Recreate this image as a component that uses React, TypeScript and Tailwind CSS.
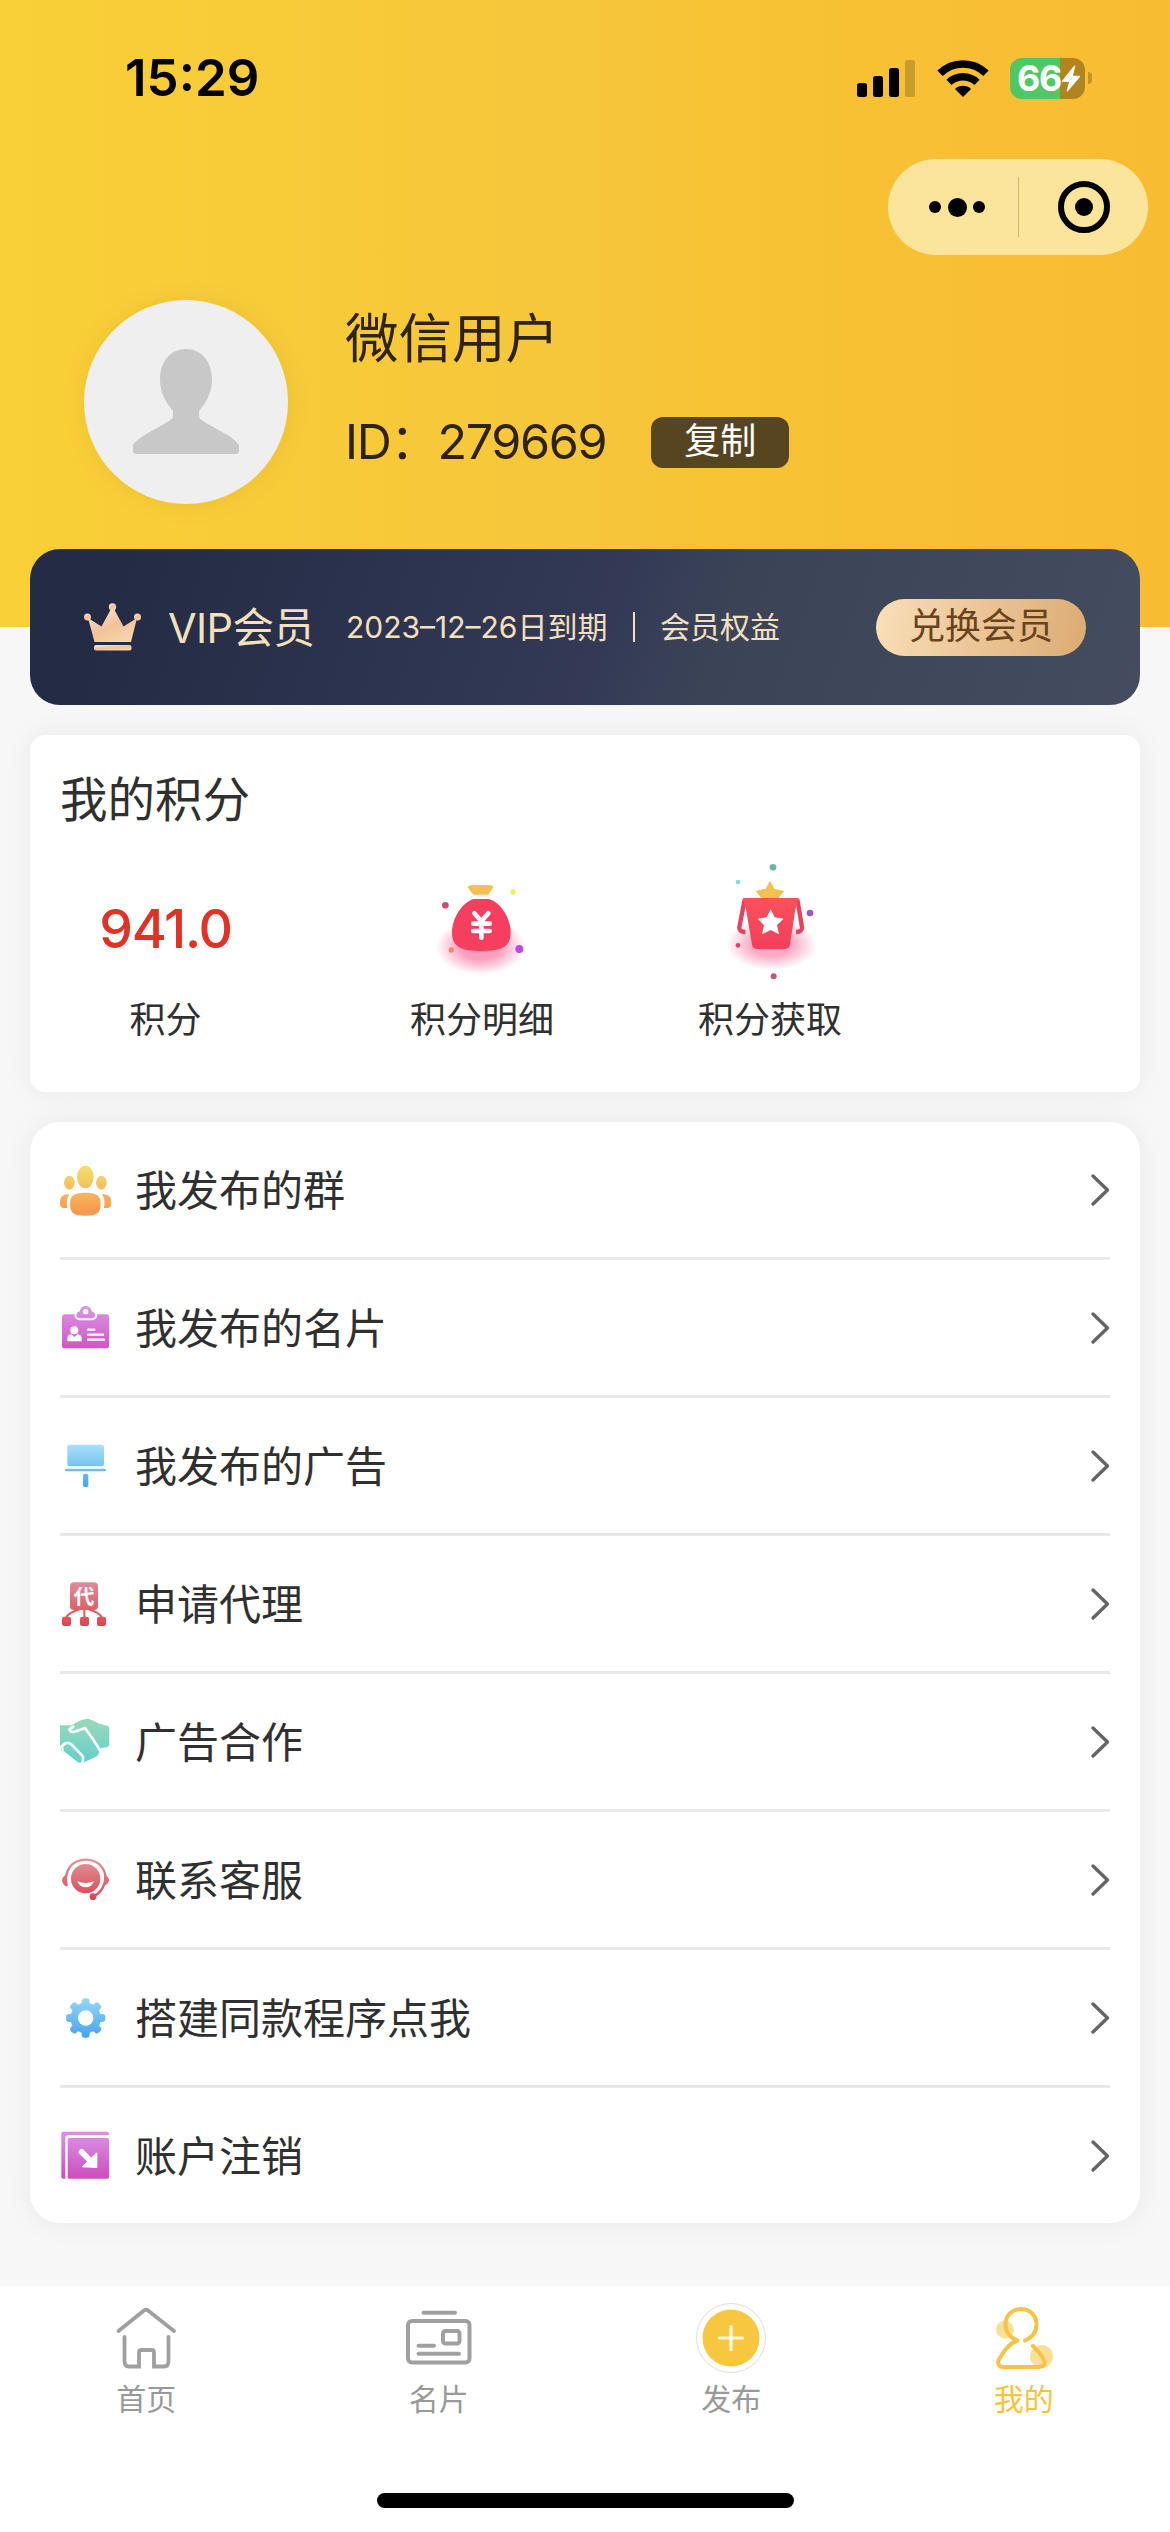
import type { ReactNode } from 'react';

interface MenuItem {
    label: string;
    icon: ReactNode;
}

function Gradient({ id, from, to }: { id: string; from: string; to: string }) {
    return (
        <linearGradient id={id} x1="0" y1="0" x2="0" y2="156" gradientUnits="userSpaceOnUse">
            <stop offset="0.1" stopColor={from} />
            <stop offset="0.9" stopColor={to} />
        </linearGradient>
    );
}

function MenuIcon({ children }: { children: ReactNode }) {
    return (
        <svg viewBox="0 0 156 156" className="h-[52px] w-[52px] shrink-0">
            {children}
        </svg>
    );
}

function GroupIcon() {
    return (
        <MenuIcon>
            <Gradient id="group" from="#f3dc6c" to="#f79a50" />
            <g fill="url(#group)">
                <ellipse cx="76" cy="39" rx="25" ry="34" />
                <ellipse cx="28" cy="56" rx="16" ry="21" />
                <ellipse cx="124" cy="56" rx="16" ry="21" />
                <path d="M76 86C104 86 122 92 122 116C122 147 112 155 76 155C40 155 30 147 30 116C30 92 48 86 76 86Z" />
                <path d="M28 90C20 103 19 117 22 132C6 133 0 130 0 116C0 98 8 91 28 90Z" />
                <path d="M126 90C134 103 135 117 132 132C148 133 154 130 154 116C154 98 146 91 126 90Z" />
            </g>
        </MenuIcon>
    );
}

function CardIcon() {
    return (
        <MenuIcon>
            <Gradient id="card" from="#dc93e4" to="#cf55c6" />
            <rect x="6" y="37" width="141" height="102" rx="8" fill="url(#card)" />
            <path
                d="M60 49C46 49 46 31 60 28C62 7 92 7 95 28C109 31 109 49 95 49Z"
                fill="url(#card)"
                stroke="#fff"
                strokeWidth="12"
                paintOrder="stroke"
            />
            <circle cx="77" cy="29" r="8" fill="#fff" />
            <circle cx="43" cy="85" r="12" fill="#fff" />
            <path d="M22 118V108Q23 98 34 97L43 105L53 97Q64 98 65 108V118Z" fill="#fff" />
            <path
                d="M84 83H103M84 98H129M84 113H132"
                stroke="#fff"
                strokeWidth="7"
                strokeLinecap="round"
            />
        </MenuIcon>
    );
}

function BillboardIcon() {
    return (
        <MenuIcon>
            <Gradient id="billboard" from="#a8dff8" to="#46a8ea" />
            <g fill="url(#billboard)">
                <rect x="22" y="14" width="110" height="65" rx="7" />
                <rect x="15" y="86" width="123" height="8" rx="4" />
                <rect x="69" y="101" width="16" height="40" rx="5" />
            </g>
        </MenuIcon>
    );
}

function AgentIcon() {
    return (
        <MenuIcon>
            <Gradient id="agent" from="#e08a9a" to="#e0484c" />
            <g fill="url(#agent)">
                <rect x="30" y="13" width="84" height="83" rx="12" />
                <rect x="6" y="116" width="27" height="28" rx="6" />
                <rect x="60" y="116" width="27" height="28" rx="6" />
                <rect x="111" y="116" width="27" height="28" rx="6" />
            </g>
            <path
                d="M19 118C24 104 40 102 58 94M73 94V118M125 118C120 104 105 102 87 94"
                fill="none"
                stroke="#df5c66"
                strokeWidth="6"
            />
            <text
                x="72"
                y="77"
                textAnchor="middle"
                fill="#fff"
                className="text-[62px] font-bold"
            >
                代
            </text>
        </MenuIcon>
    );
}

function HandshakeIcon() {
    return (
        <MenuIcon>
            <Gradient id="shake" from="#98d9b9" to="#62d0cf" />
            <path
                d="M0 28L34 28L56 16Q74 7 84 8Q98 12 114 22L140 29Q148 30 148 36V84Q148 92 140 94L124 96L112 120L66 142L52 139L6 108L0 90Z"
                fill="url(#shake)"
            />
            <g fill="none" stroke="#fff" strokeWidth="8" strokeLinejoin="round" strokeLinecap="round">
                <path d="M40 32L28 40Q30 50 44 47L75 36L98 68L122 106" />
                <path d="M-6 102L14 83Q24 77 34 85L66 118Q74 128 64 146" />
                <path d="M8 96V106L54 142" strokeWidth="5" />
            </g>
        </MenuIcon>
    );
}

function SupportIcon() {
    return (
        <MenuIcon>
            <Gradient id="support" from="#e3949a" to="#d8434f" />
            <circle cx="77" cy="74" r="44" fill="url(#support)" />
            <path
                d="M20 96C10 48 38 17 77 17C116 17 144 48 134 86C128 108 116 120 100 127"
                fill="none"
                stroke="url(#support)"
                strokeWidth="7"
            />
            <path d="M19 62Q6 68 6 79Q7 90 19 98Z" fill="url(#support)" />
            <path d="M134 62Q147 68 147 79Q146 90 131 96Z" fill="url(#support)" />
            <circle cx="99" cy="128" r="10" fill="url(#support)" />
            <path d="M52 82Q77 92 102 82Q95 100 77 100Q59 100 52 82Z" fill="#fff" />
        </MenuIcon>
    );
}

function GearIcon() {
    return (
        <MenuIcon>
            <Gradient id="gear" from="#9cd8f2" to="#41a2f2" />
            <mask id="gear-mask" maskUnits="userSpaceOnUse" x="0" y="0" width="156" height="156">
                <circle cx="77" cy="78" r="46" fill="#fff" />
                {[0, 45, 90, 135].map((angle) => (
                    <rect
                        key={angle}
                        x="65"
                        y="19"
                        width="24"
                        height="118"
                        rx="9"
                        fill="#fff"
                        transform={`rotate(${angle} 77 78)`}
                    />
                ))}
                <circle cx="77" cy="78" r="23" fill="#000" />
            </mask>
            <rect width="156" height="156" fill="url(#gear)" mask="url(#gear-mask)" />
        </MenuIcon>
    );
}

function LogoutIcon() {
    return (
        <MenuIcon>
            <Gradient id="logout" from="#dc8de2" to="#cc50c0" />
            <path
                d="M10 5H141Q147 5 147 16H24Q16 16 16 24V146H10Q4 146 4 140V11Q4 5 10 5Z"
                fill="url(#logout)"
            />
            <rect x="23" y="24" width="124" height="122" rx="5" fill="url(#logout)" />
            <path d="M65 66L92 93" stroke="#fff" strokeWidth="18" strokeLinecap="round" />
            <path
                d="M110 70V112L68 110Z"
                fill="#fff"
                stroke="#fff"
                strokeWidth="4"
                strokeLinejoin="round"
            />
        </MenuIcon>
    );
}

const menuItems: MenuItem[] = [
    { label: '我发布的群', icon: <GroupIcon /> },
    { label: '我发布的名片', icon: <CardIcon /> },
    { label: '我发布的广告', icon: <BillboardIcon /> },
    { label: '申请代理', icon: <AgentIcon /> },
    { label: '广告合作', icon: <HandshakeIcon /> },
    { label: '联系客服', icon: <SupportIcon /> },
    { label: '搭建同款程序点我', icon: <GearIcon /> },
    { label: '账户注销', icon: <LogoutIcon /> },
];

function StatusBar() {
    return (
        <div className="flex h-[159px] items-center justify-between pr-[78px] pb-[3px] pl-[125px] text-black">
            <span className="text-[51px] font-semibold">15:29</span>
            <div className="flex items-center">
                <svg viewBox="0 0 58 37" className="h-[37px] w-[58px]">
                    <rect y="23" width="10" height="14" rx="2.5" />
                    <rect x="16" y="16" width="10" height="21" rx="2.5" />
                    <rect x="32" y="8" width="10" height="29" rx="2.5" />
                    <rect x="48" width="10" height="37" rx="2.5" fill="#c99b2a" />
                </svg>
                <svg viewBox="468 117 154 111" className="ml-[22px] h-[37px] w-[52px]">
                    <path
                        d="M476 157A99 99 0 0 1 614 157"
                        fill="none"
                        stroke="#000"
                        strokeWidth="23"
                    />
                    <path
                        d="M503 184A61 61 0 0 1 587 184"
                        fill="none"
                        stroke="#000"
                        strokeWidth="22"
                    />
                    <path d="M545 228L521 204A34 34 0 0 1 569 204Z" />
                </svg>
                <div className="ml-[21px] flex h-[41px] w-[75px] items-center rounded-[12px] bg-[linear-gradient(to_right,#4fc765_67%,#b0851f_67%)] pl-[7px]">
                    <span className="w-[45px] text-[36px] leading-[41px] font-bold tracking-[-0.04em] text-white">
                        66
                    </span>
                    <svg viewBox="843 135 54 80" className="h-[27px] w-[18px] shrink-0">
                        <path
                            d="M881 138L845 183H867L859 212L895 169H873Z"
                            fill="#fff"
                            stroke="#fff"
                            strokeWidth="4"
                            strokeLinejoin="round"
                        />
                    </svg>
                </div>
                <div className="ml-[3px] h-[12px] w-[4px] rounded-r-full bg-[#c4942a]" />
            </div>
        </div>
    );
}

function Capsule() {
    return (
        <div className="mr-[22px] ml-auto flex h-[96px] w-[260px] items-center rounded-full bg-[#fae59b]">
            <div className="flex w-[130px] items-center justify-center gap-[6.5px] pl-[8px]">
                <i className="h-[12px] w-[12px] rounded-full bg-black" />
                <i className="h-[19px] w-[19px] rounded-full bg-black" />
                <i className="h-[12px] w-[12px] rounded-full bg-black" />
            </div>
            <div className="h-[60px] w-px bg-[#c9b87c]" />
            <div className="flex w-[129px] items-center justify-center">
                <div className="flex h-[52px] w-[52px] items-center justify-center rounded-full border-[6.5px] border-black">
                    <i className="h-[18px] w-[18px] rounded-full bg-black" />
                </div>
            </div>
        </div>
    );
}

function Profile() {
    return (
        <div className="mt-[45px] flex pl-[84px]">
            <div className="h-[204px] w-[204px] rounded-full bg-[#efefef] shadow-[0_0_24px_rgba(120,90,0,0.1)]">
                <svg viewBox="0 0 204 204" fill="#c8c8c8">
                    <path d="M102 49C117 49 128 61 128 80C128 92 122 103 115 111V117C117 123 148 134 155 145V151Q155 154 151 154H53Q49 154 49 151V145C56 134 87 123 89 117V111C82 103 76 92 76 80C76 61 87 49 102 49Z" />
                </svg>
            </div>
            <div className="ml-[57px] pt-[9px] text-[#2e2310]">
                <div className="text-[53.5px] leading-[60px]">微信用户</div>
                <div className="mt-[43px] flex h-[60px] items-center">
                    <span className="text-[48.5px] leading-[60px] tracking-[-0.028em]">
                        ID：279669
                    </span>
                    <button
                        type="button"
                        className="ml-[45px] h-[51px] w-[138px] rounded-[12px] bg-[#574522] pb-[3px] text-[36px] leading-[48px] text-white"
                    >
                        复制
                    </button>
                </div>
            </div>
        </div>
    );
}

function VipCard() {
    return (
        <div className="mx-[30px] -mt-[78px] flex h-[156px] items-center rounded-[30px] bg-[linear-gradient(110deg,#242b44_8%,#343a56_52%,#3b4357_62%,#454c5f_100%)] pl-[54px] text-[#f3e0bd]">
            <svg viewBox="0 0 58 49" className="h-[49px] w-[58px]">
                <linearGradient id="crown" x1="0" y1="0" x2="0.6" y2="1">
                    <stop offset="0" stopColor="#fbe6dc" />
                    <stop offset="0.6" stopColor="#f3c295" />
                    <stop offset="1" stopColor="#f7d3ae" />
                </linearGradient>
                <g fill="url(#crown)">
                    <circle cx="3.5" cy="14" r="3.5" />
                    <circle cx="28.5" cy="4" r="3.7" />
                    <circle cx="53.5" cy="14" r="3.5" />
                    <path d="M4 15L17.5 23.5L27 6H30L39.5 23.5L53 15L47 39H10.5Z" />
                    <rect x="10" y="42" width="37.5" height="5.5" rx="2" />
                </g>
            </svg>
            <span className="ml-[26px] w-[178px] pt-[2px] text-[41.5px] font-[380] tracking-[-0.015em]">
                VIP会员
            </span>
            <span className="w-[265px] pt-[1px] text-[30px] font-[380] whitespace-nowrap">
                2023–12–26日到期
            </span>
            <i className="ml-[22px] h-[30px] w-[2px] bg-[#f3e0bd]" />
            <span className="ml-[25px] pt-[1px] text-[30px] font-[380]">会员权益</span>
            <button
                type="button"
                className="mr-[54px] ml-auto h-[57px] w-[210px] rounded-full bg-[linear-gradient(100deg,#f9dfb8,#dcab73)] pb-[3px] text-[36px] leading-[54px] font-[380] text-[#6b421c]"
            >
                兑换会员
            </button>
        </div>
    );
}

function BagIcon() {
    return (
        <svg viewBox="-9 0 390 390" className="h-[130px] w-[130px]">
            <radialGradient id="bag-glow">
                <stop offset="0.45" stopColor="#f98fb3" stopOpacity="0.85" />
                <stop offset="1" stopColor="#f98fb3" stopOpacity="0" />
            </radialGradient>
            <ellipse cx="182" cy="260" rx="134" ry="84" fill="url(#bag-glow)" />
            <path
                d="M162 117H206C238 124 272 172 272 216C272 262 244 273 184 273C124 273 96 262 96 216C96 172 130 124 162 117Z"
                fill="#f43f5e"
            />
            <path d="M143 82Q146 75 160 75H204Q218 75 220 82L205 104H160Z" fill="#f2c14e" />
            <path
                d="M163 160L184 184L205 160M160 191H209M160 213H209M184 186V233"
                fill="none"
                stroke="#fff"
                strokeWidth="14"
                strokeLinecap="round"
                strokeLinejoin="round"
            />
            <circle cx="76" cy="136" r="10" fill="#cf4a78" />
            <circle cx="279" cy="96" r="8" fill="#f5ee55" />
            <circle cx="94" cy="270" r="8" fill="#ec8a6b" />
            <circle cx="298" cy="267" r="12" fill="#b84af0" />
        </svg>
    );
}

function GiftIcon() {
    return (
        <svg viewBox="375 120 390 390" className="h-[130px] w-[130px]">
            <radialGradient id="gift-glow">
                <stop offset="0.45" stopColor="#f98fb3" stopOpacity="0.75" />
                <stop offset="1" stopColor="#f98fb3" stopOpacity="0" />
            </radialGradient>
            <linearGradient id="gift" x1="0" y1="0" x2="0" y2="1">
                <stop offset="0" stopColor="#f9525a" />
                <stop offset="1" stopColor="#f23f5d" />
            </linearGradient>
            <ellipse cx="575" cy="374" rx="136" ry="76" fill="url(#gift-glow)" />
            <path
                d="M570 182L583 206L613 213L594 236H545L527 213L557 206Z"
                fill="#f2c14e"
            />
            <path
                d="M494 238L478 322Q477 336 496 336M652 238L666 322Q667 336 648 336"
                fill="none"
                stroke="#e9405c"
                strokeWidth="13"
            />
            <path
                d="M489 234H656L646 268L630 374Q627 387 614 387H532Q519 387 516 374L498 268Z"
                fill="url(#gift)"
            />
            <path
                d="M572 268L584 292L611 296L591 315L597 343L572 330L546 343L552 315L533 296L560 292Z"
                fill="#fff"
            />
            <circle cx="579" cy="142" r="10" fill="#6fb5a6" />
            <circle cx="474" cy="186" r="7" fill="#7edcd3" />
            <circle cx="690" cy="279" r="10" fill="#a64fd0" />
            <circle cx="474" cy="376" r="7" fill="#dc3f78" />
            <circle cx="581" cy="469" r="9" fill="#c4557b" />
        </svg>
    );
}

function PointsCard() {
    return (
        <div className="mx-[30px] mt-[30px] h-[357px] rounded-[15px] bg-white pt-[35px] text-[#303030] shadow-[0_0_30px_rgba(0,0,0,0.06)]">
            <div className="pl-[30px] text-[47.5px] leading-[60px]">我的积分</div>
            <div className="mt-[30px] grid grid-cols-[271px_362px_214px] text-center text-[36px] leading-[48px]">
                <div>
                    <div className="flex h-[130px] items-center justify-center pt-[7px] text-[53.5px] font-[550] tracking-[-0.025em] text-[#df3327]">
                        941.0
                    </div>
                    <div className="mt-[6px]">积分</div>
                </div>
                <div className="flex flex-col items-center">
                    <BagIcon />
                    <div className="mt-[6px]">积分明细</div>
                </div>
                <div className="flex flex-col items-center">
                    <GiftIcon />
                    <div className="mt-[6px]">积分获取</div>
                </div>
            </div>
        </div>
    );
}

function MenuCard() {
    return (
        <div className="mx-[30px] mt-[30px] rounded-[30px] bg-white px-[30px] shadow-[0_0_30px_rgba(0,0,0,0.06)]">
            {menuItems.map((item) => (
                <div
                    key={item.label}
                    className="flex h-[138px] items-center border-b-[3px] border-[#e8e8e8] last:h-[135px] last:border-b-0"
                >
                    {item.icon}
                    <span className="ml-[23px] pt-[1px] text-[42px] text-[#303030]">
                        {item.label}
                    </span>
                    <svg
                        viewBox="0 0 20 34"
                        className="ml-auto h-[34px] w-[20px]"
                        fill="none"
                        stroke="#646464"
                        strokeWidth="3.4"
                        strokeLinecap="round"
                        strokeLinejoin="round"
                    >
                        <path d="M3 3L17.5 17L3 31" />
                    </svg>
                </div>
            ))}
        </div>
    );
}

function TabBar() {
    return (
        <div className="mt-auto h-[246px] bg-white">
            <div className="grid grid-cols-4 pt-[16px] text-center text-[30px] leading-[40px] font-[380] text-[#999]">
                <div className="flex flex-col items-center">
                    <svg
                        viewBox="0 0 72 72"
                        className="h-[72px] w-[72px]"
                        fill="none"
                        stroke="#a0a0a0"
                        strokeWidth="3.8"
                        strokeLinecap="round"
                    >
                        <path d="M8.5 29L34 8.5Q36 7 38 8.5L64 29" />
                        <path d="M14.5 35V59Q14.5 64.5 19 64.5H29V50.5Q29 48 31.5 48H41.5Q44 48 44 50.5V64.5H54Q58.5 64.5 58.5 59V35" />
                    </svg>
                    <span className="mt-[5px]">首页</span>
                </div>
                <div className="flex flex-col items-center">
                    <svg
                        viewBox="0 0 72 72"
                        className="h-[72px] w-[72px]"
                        fill="none"
                        stroke="#a0a0a0"
                        strokeWidth="4"
                        strokeLinecap="round"
                    >
                        <path d="M20.5 10.7H52M15.5 43.7H31M15.5 51.7H56" />
                        <rect x="5" y="19" width="61.5" height="41.5" rx="4" />
                        <rect x="40" y="29" width="16.5" height="12.5" rx="2.5" />
                    </svg>
                    <span className="mt-[5px]">名片</span>
                </div>
                <div className="flex flex-col items-center">
                    <svg viewBox="0 0 72 72" className="h-[72px] w-[72px]">
                        <circle cx="36" cy="36" r="34.5" fill="#fff" stroke="#dedede" />
                        <circle cx="36" cy="36" r="28.5" fill="#f7c73f" />
                        <path
                            d="M24.5 36H47.5M36 24.5V47.5"
                            stroke="#fff8e0"
                            strokeWidth="3.2"
                            strokeLinecap="round"
                        />
                    </svg>
                    <span className="mt-[5px]">发布</span>
                </div>
                <div className="flex flex-col items-center text-[#f2c53d]">
                    <svg viewBox="0 0 72 72" className="h-[72px] w-[72px]" fill="none">
                        <circle cx="17" cy="27.5" r="9" fill="#f9df98" />
                        <circle cx="53.5" cy="54.5" r="11.5" fill="#f9df98" />
                        <path
                            d="M29.5 38.5C21 35 17.5 29 17.5 22.5C17.5 13 24.5 7 33 7C41.5 7 48.5 13 48.5 22.5C48.5 30 44 35.5 37 38.5M29.5 38.5C21 41.5 16 49 11 57.5C9 61.5 11 65 15 65H50C56 65 57.5 61.5 56 58C54 53 49 48 45 44"
                            stroke="#f5c445"
                            strokeWidth="4"
                            strokeLinecap="round"
                            strokeLinejoin="round"
                        />
                    </svg>
                    <span className="mt-[5px]">我的</span>
                </div>
            </div>
            <div className="mx-auto mt-[74px] h-[15px] w-[417px] rounded-full bg-black" />
        </div>
    );
}

export default function App() {
    return (
        <div className="flex h-[2532px] w-[1170px] flex-col overflow-hidden bg-[#f7f7f7] font-['Inter','Noto_Sans_CJK_SC',sans-serif]">
            <div className="h-[627px] shrink-0 bg-[linear-gradient(to_right,#f9d037,#f6c63b_50%,#f8c335_62%,#f8bc33)]">
                <StatusBar />
                <Capsule />
                <Profile />
            </div>
            <VipCard />
            <PointsCard />
            <MenuCard />
            <TabBar />
        </div>
    );
}
